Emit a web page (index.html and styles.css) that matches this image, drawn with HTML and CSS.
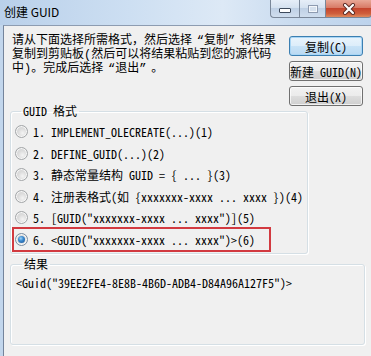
FILE: index.html
```html
<!DOCTYPE html>
<html>
<head>
    <meta charset="utf-8">
    <title>创建 GUID</title>
    <link rel="stylesheet" href="styles.css">
</head>
<body>
    <div class="window">
        <div class="titlebar">
            <span class="title">创建 GUID</span>
            <div class="caption-buttons">
                <span class="cap-btn cap-min"><span class="min-icon"></span></span>
                <span class="cap-btn cap-max"><span class="max-icon"></span></span>
                <span class="cap-btn cap-close">
                    <svg width="14" height="12" viewBox="0 0 14 12">
                        <path d="M3 2 L11 10 M11 2 L3 10" stroke="#5a2a24" stroke-width="4" stroke-linecap="round"/>
                        <path d="M3 2 L11 10 M11 2 L3 10" stroke="#fff" stroke-width="2.2" stroke-linecap="round"/>
                    </svg>
                </span>
            </div>
        </div>
        <div class="client">
            <div class="top-row">
                <p class="intro">请从下面选择所需格式，然后选择<span class="q-open">“</span>复制<span class="q-close">”</span>将结果<br>复制到剪贴板(然后可以将结果粘贴到您的源代码<br>中)。完成后选择<span class="q-open">“</span>退出<span class="q-close">”</span>。</p>
                <div class="buttons">
                    <button class="btn btn-default">复制(C)</button>
                    <button class="btn">新建 GUID(N)</button>
                    <button class="btn">退出(X)</button>
                </div>
            </div>

            <fieldset class="group formats">
                <legend>GUID 格式</legend>
                <label class="option"><span class="radio"></span>1. IMPLEMENT_OLECREATE(...)(1)</label>
                <label class="option"><span class="radio"></span>2. DEFINE_GUID(...)(2)</label>
                <label class="option"><span class="radio"></span>3. 静态常量结构 GUID = { ... }(3)</label>
                <label class="option"><span class="radio"></span>4. 注册表格式(如 {xxxxxxx-xxxx ... xxxx })(4)</label>
                <label class="option"><span class="radio"></span>5. [GUID("xxxxxxx-xxxx ... xxxx")](5)</label>
                <label class="option marked"><span class="radio checked"></span>6. &lt;GUID("xxxxxxx-xxxx ... xxxx")&gt;(6)</label>
            </fieldset>

            <fieldset class="group result">
                <legend>结果</legend>
                <div class="result-text">&lt;Guid("39EE2FE4-8E8B-4B6D-ADB4-D84A96A127F5")&gt;</div>
            </fieldset>
        </div>
    </div>
</body>
</html>
```

FILE: styles.css
```css
body {
    margin: 0;
    width: 371px;
    height: 356px;
    overflow: hidden;
    font-family: "Noto Sans Mono CJK SC", "Liberation Mono", "Noto Sans CJK SC", monospace;
    font-size: 12px;
    color: #000;
    background: #c2d6ec;
}

.window {
    display: flex;
    flex-direction: column;
    height: 356px;
}

/* title bar (aero) */
.titlebar {
    flex: none;
    height: 25px;
    display: flex;
    align-items: flex-start;
    background: linear-gradient(to right, #b9d0ea 0%, #cddff2 35%, #dde9f6 60%, #c9dbef 80%, #bdd3ec 100%);
}

.title {
    font-family: "Noto Sans CJK SC", sans-serif;
    font-size: 12px;
    line-height: 24px;
    padding-left: 4px;
}

.caption-buttons {
    margin-left: auto;
    margin-right: -1px;
    display: flex;
    height: 18px;
}

.cap-btn {
    display: flex;
    align-items: center;
    justify-content: center;
    box-sizing: border-box;
    height: 18px;
    border: 1px solid #7a8799;
    border-top: none;
}

.cap-min {
    width: 29px;
    border-right: none;
    border-radius: 0 0 0 4px;
    background: linear-gradient(#e6eef8, #d3e0ef 50%, #bfd0e5 50%, #d0deee);
}

.cap-max {
    width: 26px;
    border-right: none;
    background: linear-gradient(#e6eef8, #d3e0ef 50%, #bfd0e5 50%, #d0deee);
}

.cap-close {
    width: 47px;
    border-radius: 0 0 4px 0;
    background: linear-gradient(#e9a897, #d87b66 45%, #c5452d 50%, #cf5e3c 80%, #e08a5c);
}

.min-icon {
    width: 10px;
    height: 3px;
    margin-top: 4px;
    background: #fff;
    border: 1px solid #3d4a5c;
    border-radius: 1px;
}

.max-icon {
    width: 8px;
    height: 6px;
    border: 1px solid #8e9bb0;
    box-shadow: inset 0 0 0 1px #f4f7fb;
    background: #d6e1ee;
}

/* client area */
.client {
    flex: 1;
    margin-left: 3px;
    border-left: 1px solid #74849b;
    border-top: 1px solid #8d9cb1;
    background: #f0f0f0;
}

.top-row {
    display: flex;
    padding: 10px 8px 0 8px;
}

.intro {
    margin: -2px 0 0 0;
    font-family: "Liberation Mono", "Noto Sans Mono CJK SC", "Noto Sans CJK SC", monospace;
    line-height: 14px;
    white-space: nowrap;
}

/* full-width quote marks */
.q-open,
.q-close {
    display: inline-block;
    width: 12px;
}

.q-open {
    text-align: right;
}

.q-close {
    text-align: left;
}

.buttons {
    margin-left: auto;
    display: flex;
    flex-direction: column;
    gap: 5px;
    width: 74px;
}

.btn {
    height: 20px;
    padding: 0;
    font-family: inherit;
    font-size: 12px;
    color: #000;
    white-space: nowrap;
    border: 1px solid #707070;
    border-radius: 3px;
    background: linear-gradient(#f2f2f2 0%, #ebebeb 50%, #dddddd 50%, #cfcfcf 100%);
    box-shadow: inset 0 0 0 1px rgba(255, 255, 255, 0.7);
}

.btn-default {
    border-color: #3c7fb1;
    background: linear-gradient(#eaf4fc 0%, #dcedfa 50%, #c8e3f7 50%, #bad9f2 100%);
    box-shadow: inset 0 0 0 1px #a9d6f5;
}

/* group boxes */
.group {
    box-sizing: border-box;
    margin: 0 0 0 6px;
    border: 1px solid #d5dfe5;
    border-radius: 3px;
    box-shadow: inset 1px 1px 0 #fff, 1px 1px 0 #fff;
}

.group legend {
    padding: 0 2px;
    margin-left: 6px;
    line-height: 14px;
}

.formats {
    width: 298px;
    margin-top: -2px;
    padding: 3px 0 3px 4px;
}

.option {
    position: relative;
    display: flex;
    align-items: center;
    gap: 5px;
    height: 21.5px;
    white-space: nowrap;
}

.radio {
    position: relative;
    flex: none;
    width: 13px;
    height: 13px;
    box-sizing: border-box;
    border: 1px solid #a3a6a8;
    border-radius: 50%;
    background: radial-gradient(circle at 60% 65%, #f4f4f4 0%, #dcdcdc 45%, #cfd0d1 100%);
    box-shadow: inset 0 0 0 1px #f7f7f7;
}

.radio.checked {
    border-color: #7a8c9f;
}

.radio.checked::after {
    content: "";
    position: absolute;
    left: 2px;
    top: 2px;
    width: 7px;
    height: 7px;
    border-radius: 50%;
    background: radial-gradient(circle at 40% 35%, #9fd3f7 0%, #3a8ad0 40%, #1c4f8c 100%);
}

/* annotation box around the chosen option */
.marked::after {
    content: "";
    position: absolute;
    left: -3px;
    top: -2px;
    width: 259px;
    height: 25px;
    box-sizing: border-box;
    border: 2px solid #d23a40;
}

.result {
    width: 355px;
    height: 88px;
    margin-top: 3px;
    padding: 5px 0 0 5px;
}

.result-text {
    line-height: 14px;
    white-space: nowrap;
}
```
